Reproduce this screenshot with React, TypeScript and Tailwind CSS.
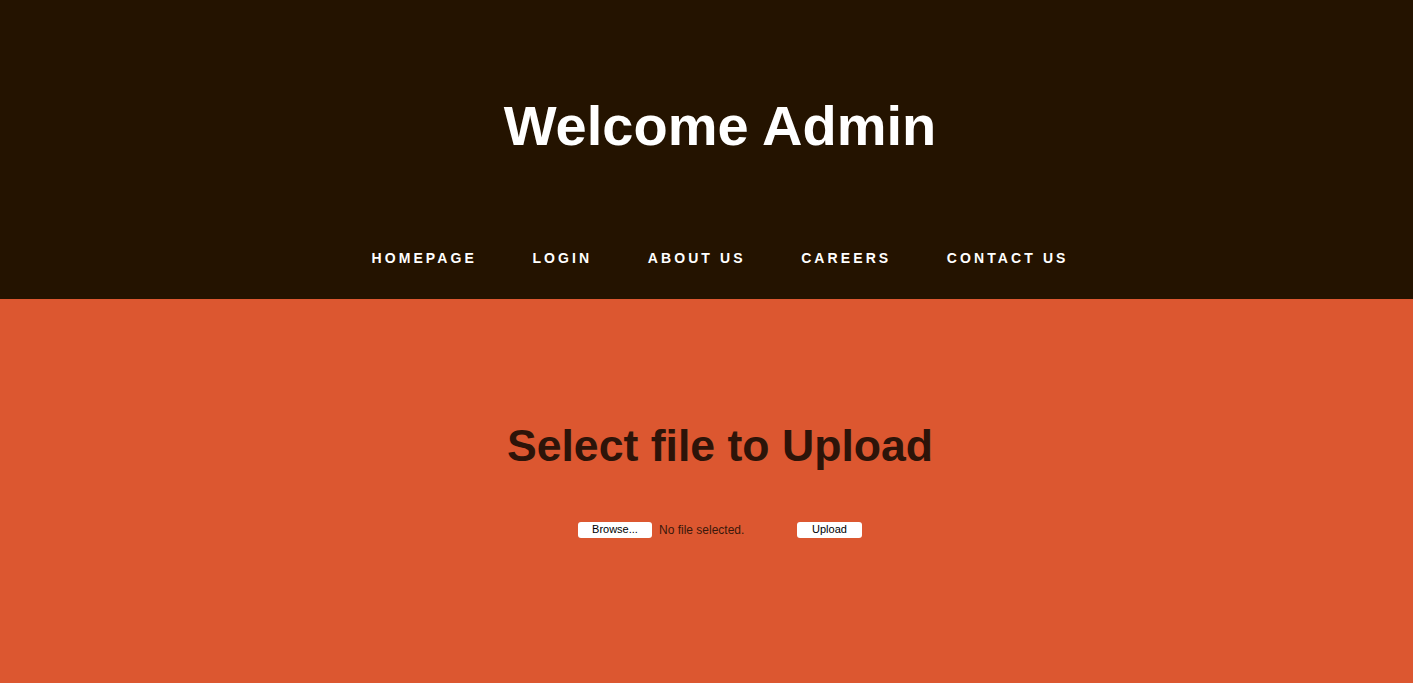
import React from "react";

export default function App() {
  const navItems = ["HOMEPAGE", "LOGIN", "ABOUT US", "CAREERS", "CONTACT US"];
  return (
    <div
      className="min-h-screen bg-[#dc5730] flex flex-col"
      style={{ fontFamily: '"Liberation Sans", Arial, Helvetica, sans-serif' }}
    >
      <header className="h-[299px] bg-[#241300] flex flex-col items-center pl-[27px] pt-[98px]">
        <h1 className="text-[56px] leading-none font-bold text-white">Welcome Admin</h1>
        <nav className="mt-[97px] flex items-center gap-[55.5px]">
          {navItems.map((n) => (
            <a
              key={n}
              href="#"
              className="text-[14px] leading-none font-bold text-white tracking-[3.1px]"
            >
              {n}
            </a>
          ))}
        </nav>
      </header>
      <main className="flex-1 flex flex-col items-center pl-[27px] pt-[125px]">
        <h2 className="text-[44.6px] leading-none font-bold text-[#2d1409]">Select file to Upload</h2>
        <div className="mt-[53px] flex items-center">
          <div className="flex items-center w-[219px]">
            <span className="h-[16px] w-[74px] bg-white rounded-[3px] flex items-center justify-center text-[11px] leading-none text-black">
              Browse...
            </span>
            <span className="ml-[7px] text-[12px] leading-none text-[#3a170b]">No file selected.</span>
          </div>
          <span className="h-[16px] w-[65px] bg-white rounded-[3px] flex items-center justify-center text-[11px] leading-none text-black">
            Upload
          </span>
        </div>
      </main>
    </div>
  );
}
